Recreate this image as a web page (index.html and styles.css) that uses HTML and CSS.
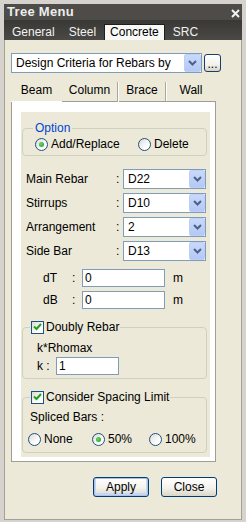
FILE: index.html
```html
<!DOCTYPE html>
<html lang="en">
<head>
  <meta charset="UTF-8" />
  <title>Tree Menu</title>
  <link rel="stylesheet" href="styles.css">
</head>
<body>
  <div class="window">
    <div class="titlebar">
      <span class="title">Tree Menu</span>
      <svg class="close" width="9" height="9" viewBox="0 0 9 9"><path d="M1 1 L8 8 M8 1 L1 8" stroke="#f2f2f2" stroke-width="2"/></svg>
    </div>
    <div class="maintabs">
      <span class="mtab">General</span>
      <span class="mtab">Steel</span>
      <span class="mtab active">Concrete</span>
      <span class="mtab">SRC</span>
    </div>

    <div class="main">
      <div class="combo-row">
        <div class="combo">
          <span class="combo-text">Design Criteria for Rebars by</span>
          <span class="drop"><svg width="9" height="6" viewBox="0 0 9 6"><path d="M1 1 L4.5 4.5 L8 1" fill="none" stroke="#4d6185" stroke-width="2"/></svg></span>
        </div>
        <button class="dots"><span>...</span></button>
      </div>

      <div class="subtabs">
        <span class="stab beam active">Beam</span>
        <span class="stab column">Column</span>
        <span class="stab brace">Brace</span>
        <span class="stab wall">Wall</span>
      </div>

      <div class="panel">
        <div class="page">
          <!-- Option -->
          <fieldset class="group">
            <legend class="blue">Option</legend>
            <div class="gbody option-body">
              <div class="radios option-radios">
                <span class="ritem"><span class="radio on"></span>Add/Replace</span>
                <span class="ritem"><span class="radio"></span>Delete</span>
              </div>
            </div>
          </fieldset>

          <div class="fields">
            <div class="field"><span class="flabel">Main Rebar</span><span class="colon">:</span><span class="select"><span class="sval">D22</span><span class="drop"><svg width="9" height="6" viewBox="0 0 9 6"><path d="M1 1 L4.5 4.5 L8 1" fill="none" stroke="#4d6185" stroke-width="2"/></svg></span></span></div>
            <div class="field"><span class="flabel">Stirrups</span><span class="colon">:</span><span class="select"><span class="sval">D10</span><span class="drop"><svg width="9" height="6" viewBox="0 0 9 6"><path d="M1 1 L4.5 4.5 L8 1" fill="none" stroke="#4d6185" stroke-width="2"/></svg></span></span></div>
            <div class="field"><span class="flabel">Arrangement</span><span class="colon">:</span><span class="select"><span class="sval">2</span><span class="drop"><svg width="9" height="6" viewBox="0 0 9 6"><path d="M1 1 L4.5 4.5 L8 1" fill="none" stroke="#4d6185" stroke-width="2"/></svg></span></span></div>
            <div class="field"><span class="flabel">Side Bar</span><span class="colon">:</span><span class="select"><span class="sval">D13</span><span class="drop"><svg width="9" height="6" viewBox="0 0 9 6"><path d="M1 1 L4.5 4.5 L8 1" fill="none" stroke="#4d6185" stroke-width="2"/></svg></span></span></div>
          </div>

          <div class="dims">
            <div class="dim"><span class="dlabel">dT</span><span class="dcolon">:</span><span class="textbox">0</span><span class="unit">m</span></div>
            <div class="dim"><span class="dlabel">dB</span><span class="dcolon">:</span><span class="textbox">0</span><span class="unit">m</span></div>
          </div>

          <!-- Doubly Rebar -->
          <fieldset class="group gap-top">
            <legend class="chk-legend"><span class="check"><svg width="9" height="8" viewBox="0 0 9 8"><path d="M1 3.5 L3.5 6 L8 1" fill="none" stroke="#21a121" stroke-width="2"/></svg></span>Doubly Rebar</legend>
            <div class="gbody doubly-body">
              <div class="line">k*Rhomax</div>
              <div class="krow"><span class="klabel">k :</span><span class="textbox kbox">1</span></div>
            </div>
          </fieldset>

          <!-- Spacing -->
          <fieldset class="group gap-top">
            <legend class="chk-legend"><span class="check"><svg width="9" height="8" viewBox="0 0 9 8"><path d="M1 3.5 L3.5 6 L8 1" fill="none" stroke="#21a121" stroke-width="2"/></svg></span>Consider Spacing Limit</legend>
            <div class="gbody spacing-body">
              <div class="line">Spliced Bars :</div>
              <div class="radios splice-radios">
                <span class="ritem"><span class="radio"></span>None</span>
                <span class="ritem"><span class="radio on"></span>50%</span>
                <span class="ritem"><span class="radio"></span>100%</span>
              </div>
            </div>
          </fieldset>
        </div>
      </div>

      <div class="buttons">
        <button class="btn default">Apply</button>
        <button class="btn">Close</button>
      </div>
    </div>
  </div>
</body>
</html>
```

FILE: styles.css
```css
* { box-sizing: border-box; }
body {
  margin: 0;
  font-family: "Liberation Sans", Arial, sans-serif;
  font-size: 12px;
  line-height: 14px;
  color: #000;
}
.window {
  width: 246px;
  height: 522px;
  background: #d6d3ce;
  padding: 4px 4px 2px 4px;
  display: flex;
  flex-direction: column;
}
.titlebar {
  height: 16px;
  background: #4d4c48;
  display: flex;
  justify-content: space-between;
  padding: 0 2px 0 3px;
}
.title {
  font-weight: bold;
  font-size: 13px;
  line-height: 15px;
  color: #ededed;
  letter-spacing: 0.3px;
}
.close { margin-top: 5px; }
.maintabs {
  height: 20px;
  background: linear-gradient(#393835, #4a4945);
  display: flex;
  gap: 2px;
  padding: 4px 0 0 2px;
}
.mtab {
  height: 16px;
  padding: 1px 6px;
  color: #f2f2f2;
}
.mtab.active {
  background: #f8f8f6;
  color: #000;
  border: 1px solid #1e1e1c;
  border-bottom: none;
  padding: 0 5px 1px;
}

.main {
  flex: 1;
  background: #ece9d8;
  border: 1px solid #a5a294;
  border-top: none;
  padding: 13px 0 0 6px;
}
.combo-row {
  display: flex;
  align-items: center;
  gap: 2px;
}
.combo {
  width: 191px;
  height: 20px;
  border: 1px solid #7f9db9;
  background: #fff;
  display: flex;
  justify-content: space-between;
}
.combo-text { padding: 2px 0 0 4px; }
.drop {
  width: 17px;
  height: 18px;
  background: linear-gradient(#c9d9fc, #b4c8f5);
  border: 1px solid #bccff7;
  border-radius: 2px;
  display: flex;
  align-items: center;
  justify-content: center;
}
.dots {
  width: 17px;
  height: 18px;
  padding: 0 0 1px;
  border: 1px solid #1c3c6c;
  border-radius: 3px;
  background: linear-gradient(#fff, #f2f1ea 60%, #d8d4c8);
  font: inherit;
  line-height: 12px;
  display: flex;
  align-items: flex-end;
  justify-content: center;
  overflow: visible;
}

.subtabs {
  display: flex;
  margin-top: 9px;
  height: 20px;
}
.stab {
  height: 20px;
  padding-top: 1px;
  text-align: center;
  border-bottom: 1px solid #a09e92;
}
.stab.active { border-bottom-color: #fff; }
.beam { width: 51px; }
.column { width: 56px; border-right: 1px solid #a9a79b; box-shadow: 1px 0 0 #fff; }
.brace { width: 47px; margin-left: 1px; border-right: 1px solid #a9a79b; box-shadow: 1px 0 0 #fff; }
.wall { width: 50px; }

.panel {
  width: 205px;
  background: #fff;
  border: 1px solid #a09e92;
  border-top: none;
  padding: 10px 5px 4px 9px;
}
.page {
  background: #ece9d8;
  padding: 9px 3px 4px 1px;
}

.group {
  margin: 0;
  padding: 0;
  border: 1px solid #d0d0bf;
  border-radius: 4px;
  min-width: 0;
}
.group legend {
  margin-left: 10px;
  padding: 0 2px;
  line-height: 14px;
}
.group legend.chk-legend {
  margin-left: 7px;
  padding: 0 1px;
  display: flex;
  align-items: center;
  gap: 2px;
}
.gap-top { margin-top: 11px; }
.blue { color: #0046d5; }

.option-body { padding: 2px 0 4px 12px; }
.doubly-body { padding: 7px 0 3px 14px; }
.spacing-body { padding: 6px 0 6px 7px; }

.radios { display: grid; }
.option-radios { grid-template-columns: 103px auto; }
.splice-radios { grid-template-columns: 64px 57px auto; margin: 8px 0 0 -2px; }
.ritem {
  display: flex;
  align-items: center;
  gap: 3px;
}
.radio {
  width: 13px;
  height: 13px;
  border-radius: 50%;
  border: 1px solid #1c5180;
  background: linear-gradient(135deg, #dcdbd3, #fff 70%);
  display: flex;
  align-items: center;
  justify-content: center;
}
.radio.on::after {
  content: "";
  width: 5px;
  height: 5px;
  border-radius: 50%;
  background: radial-gradient(circle at 40% 40%, #6fd36f, #1a9a1a);
}
.check {
  width: 13px;
  height: 13px;
  border: 1px solid #1c5180;
  background: linear-gradient(135deg, #dcdbd3, #fff 70%);
  display: flex;
  align-items: center;
  justify-content: center;
}

.fields {
  margin-top: 13px;
  display: flex;
  flex-direction: column;
  gap: 4px;
}
.field {
  display: flex;
  align-items: center;
  height: 20px;
  padding-left: 4px;
}
.flabel { width: 90px; }
.colon { width: 7px; }
.select {
  width: 83px;
  height: 20px;
  border: 1px solid #7f9db9;
  background: #fff;
  display: flex;
  justify-content: space-between;
}
.sval { padding: 2px 0 0 4px; }
.select .drop { width: 16px; }

.dims {
  margin-top: 8px;
  display: flex;
  flex-direction: column;
  gap: 4px;
  padding-left: 21px;
}
.dim {
  display: flex;
  align-items: center;
  height: 18px;
}
.dlabel { width: 29px; }
.dcolon { width: 10px; }
.textbox {
  width: 83px;
  height: 18px;
  border: 1px solid #7f9db9;
  background: #fff;
  padding: 1px 0 0 2px;
}
.unit { margin-left: 8px; }

.krow {
  display: flex;
  align-items: center;
  margin-top: 2px;
}
.klabel { width: 19px; }
.kbox { width: 63px; }

.buttons {
  display: flex;
  justify-content: flex-end;
  gap: 12px;
  margin-top: 15px;
  padding-right: 24px;
}
.btn {
  width: 56px;
  height: 20px;
  padding: 0;
  border: 1px solid #003c74;
  border-radius: 3px;
  background: linear-gradient(#fff, #f3f2ec 55%, #d9d5c9);
  font: inherit;
  color: #000;
}
.btn.default { box-shadow: inset 0 0 0 1px #a9c3ec, inset 0 -1px 0 2px #c6d6f3; }
```
